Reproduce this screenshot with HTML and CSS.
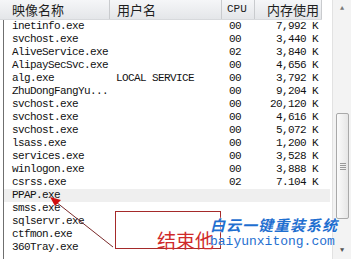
FILE: index.html
```html
<!DOCTYPE html>
<html lang="zh-CN">
<head>
    <meta charset="UTF-8">
    <title>任务管理器 - 进程</title>
    <link rel="stylesheet" href="styles.css">
</head>
<body>
    <div class="window">
        <div class="table">
            <div class="head">
                <div class="col name">映像名称</div>
                <div class="col user">用户名</div>
                <div class="col cpu">CPU</div>
                <div class="col mem">内存使用</div>
            </div>
            <div class="list">
                <div class="row"><span>inetinfo.exe</span><span></span><span>00</span><span class="num">7,992 K</span></div>
                <div class="row"><span>svchost.exe</span><span></span><span>00</span><span class="num">3,440 K</span></div>
                <div class="row"><span>AliveService.exe</span><span></span><span>02</span><span class="num">3,840 K</span></div>
                <div class="row"><span>AlipaySecSvc.exe</span><span></span><span>00</span><span class="num">4,656 K</span></div>
                <div class="row"><span>alg.exe</span><span>LOCAL SERVICE</span><span>00</span><span class="num">3,792 K</span></div>
                <div class="row"><span>ZhuDongFangYu...</span><span></span><span>00</span><span class="num">9,204 K</span></div>
                <div class="row"><span>svchost.exe</span><span></span><span>00</span><span class="num">20,120 K</span></div>
                <div class="row"><span>svchost.exe</span><span></span><span>00</span><span class="num">4,616 K</span></div>
                <div class="row"><span>svchost.exe</span><span></span><span>00</span><span class="num">5,072 K</span></div>
                <div class="row"><span>lsass.exe</span><span></span><span>00</span><span class="num">1,200 K</span></div>
                <div class="row"><span>services.exe</span><span></span><span>00</span><span class="num">3,528 K</span></div>
                <div class="row"><span>winlogon.exe</span><span></span><span>00</span><span class="num">3,888 K</span></div>
                <div class="row"><span>csrss.exe</span><span></span><span>02</span><span class="num">7.104 K</span></div>
                <div class="row selected"><span>PPAP.exe</span><span></span><span></span><span></span></div>
                <div class="row"><span>smss.exe</span><span></span><span></span><span></span></div>
                <div class="row"><span>sqlservr.exe</span><span></span><span></span><span></span></div>
                <div class="row"><span>ctfmon.exe</span><span></span><span></span><span></span></div>
                <div class="row"><span>360Tray.exe</span><span></span><span></span><span></span></div>
                <div class="row"><span class="caret"></span></div>
            </div>
        </div>
        <div class="scrollbar">
            <div class="arrow">&#9650;</div>
            <div class="track"><div class="thumb"><div class="grip"></div></div></div>
            <div class="arrow down">&#9660;</div>
        </div>
    </div>

    <svg class="pointer" width="356" height="259" viewBox="0 0 356 259">
        <line x1="113" y1="247" x2="56" y2="202" stroke="#7a2a2a" stroke-width="1"/>
        <polygon points="50,197 61,200 55,206" fill="#d01010"/>
    </svg>
    <div class="callout"><span>结束他</span></div>
    <div class="stamp">
        <div class="stamp-cn">白云一键重装系统</div>
        <div class="stamp-en">baiyunxitong.com</div>
    </div>
</body>
</html>
```

FILE: styles.css
```css
body {
    margin: 0;
    width: 356px;
    height: 259px;
    overflow: hidden;
    background-color: #fff;
    font-family: 'Liberation Mono', 'DejaVu Sans Mono', monospace;
    position: relative;
}
.window {
    display: flex;
    height: 259px;
}
.table {
    width: 330px;
    display: flex;
    flex-direction: column;
}
.head {
    display: grid;
    grid-template-columns: 110px 112px 33px 67px;
    height: 20px;
    background: linear-gradient(#f5f6f8, #e4e6e9);
    border-bottom: 1px solid #d7d9dc;
    box-sizing: border-box;
    width: 322px;
}
.head .col {
    font-family: 'Noto Sans CJK SC', 'Noto Sans', sans-serif;
    font-size: 13px;
    line-height: 19px;
    color: #1e1e1e;
    border-right: 1px solid #c9cbce;
}
.head .name { padding-left: 12px; }
.head .user { padding-left: 7px; }
.head .cpu {
    padding-left: 5px;
    font-family: 'Liberation Mono', monospace;
    font-size: 11px;
}
.head .mem { padding-left: 12px; }

.list {
    margin-left: 3px;
    border-left: 1px solid #6f6f6f;
    flex: 1;
}
.row {
    display: grid;
    grid-template-columns: 106px 112px 33px 67px;
    height: 13px;
    font-size: 11px;
    line-height: 13px;
    letter-spacing: -0.6px;
    color: #111;
    white-space: nowrap;
}
.row span:first-child { padding-left: 8px; }
.row span:nth-child(2) { padding-left: 6px; }
.row span:nth-child(3) { padding-left: 7px; }
.row .num {
    text-align: right;
    padding-right: 4px;
}
.row.selected {
    background-color: #efefef;
}
.caret {
    display: inline-block;
    width: 5px;
    height: 3px;
    background: #111;
    margin-top: 10px;
    margin-left: 8px;
    padding: 0 !important;
}

.scrollbar {
    width: 18px;
    margin-left: 2px;
    background: #f3f3f3;
    border-left: 1px solid #e2e2e2;
    display: flex;
    flex-direction: column;
}
.arrow {
    height: 17px;
    font-size: 7px;
    line-height: 17px;
    text-align: center;
    color: #7a7a7a;
}
.arrow.down { color: #555; }
.track {
    flex: 1;
    padding-top: 96px;
}
.thumb {
    margin: 0 2px 0 3px;
    height: 104px;
    border: 1px solid #a9a9a9;
    border-radius: 2px;
    background: linear-gradient(90deg, #fbfbfb, #e6e6e6);
    display: flex;
    align-items: center;
    justify-content: center;
}
.grip {
    width: 6px;
    height: 7px;
    background: repeating-linear-gradient(#9a9a9a 0 1px, transparent 1px 2px);
}

.pointer {
    position: absolute;
    left: 0;
    top: 0;
}
.callout {
    position: absolute;
    left: 115px;
    top: 211px;
    width: 104px;
    height: 36px;
    border: 1px solid #a52a2a;
    display: flex;
    justify-content: flex-end;
    align-items: flex-end;
}
.callout span {
    font-family: 'Noto Sans CJK SC', sans-serif;
    font-size: 19px;
    line-height: 19px;
    color: #d02a2a;
    margin-right: 6px;
    margin-bottom: -1px;
}
.stamp {
    position: absolute;
    left: 210px;
    top: 216px;
    color: #1f6fd0;
}
.stamp-cn {
    font-family: 'Noto Sans CJK SC', sans-serif;
    font-weight: bold;
    font-style: italic;
    font-size: 15px;
    line-height: 18px;
    letter-spacing: 1px;
    text-shadow: 0 0 2px #fff, 0 0 2px #fff;
}
.stamp-en {
    font-family: 'Liberation Mono', monospace;
    font-size: 13px;
    line-height: 15px;
    text-shadow: 0 0 2px #fff;
}
```
